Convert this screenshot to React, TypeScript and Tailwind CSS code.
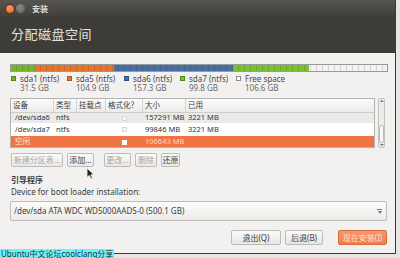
import React from "react";

const cols = "grid grid-cols-[43px_23px_29px_37px_43px_1fr] whitespace-nowrap";

function Btn({ children, disabled, w }: { children: React.ReactNode; disabled?: boolean; w: string }) {
  return (
    <div
      className={`${w} h-[14px] flex items-center justify-center rounded-[2px] border border-[#bdbbb8] bg-[linear-gradient(#fbfbfa,#e9e8e6)] text-[8px] leading-none whitespace-nowrap ${
        disabled ? "text-[#a9a7a4]" : "text-[#3c3c3c]"
      }`}
    >
      {children}
    </div>
  );
}

function Legend({ color, name, size, border }: { color: string; name: string; size: string; border: string }) {
  return (
    <div className="flex gap-[4px]">
      <div className={`mt-[2px] w-[5px] h-[5px] ${color} border ${border}`} />
      <div className="flex flex-col text-[8px] leading-[9px] whitespace-nowrap">
        <span className="text-[#4a4a4a]">{name}</span>
        <span className="text-[#6a6a6a]">{size}</span>
      </div>
    </div>
  );
}

function Check({ white }: { white?: boolean }) {
  return (
    <div className="flex items-center justify-center">
      <div className={`w-[5px] h-[5px] ${white ? "bg-white" : "border border-[#d8d8d8] bg-[#f6f6f6]"}`} />
    </div>
  );
}

export default function App() {
  const font = "font-['Noto_Sans','Noto_Sans_CJK_SC',sans-serif]";
  return (
    <div className={`w-[400px] h-[258px] relative overflow-hidden bg-[#e6e5e3] ${font}`}>
      <div className="w-[396px] h-[254px] flex flex-col border-r border-b border-[#3a3935] bg-[#f2f1f0]">
        {/* title bar */}
        <div className="h-[17px] flex items-center bg-[linear-gradient(#57554f,#403f3a)]">
          <div className="ml-[5px] w-[10px] h-[10px] rounded-full bg-[radial-gradient(circle_at_40%_35%,#f59a6b,#e05a22)] border border-[#5a2a14]" />
          <div className="ml-[1px] w-[9px] h-[9px] rounded-full bg-[radial-gradient(circle_at_40%_35%,#8a8983,#5f5e59)]" />
          <span className="ml-[7px] text-[8px] text-[#dfdbd2] font-bold leading-none">安装</span>
        </div>
        {/* header */}
        <div className="h-[36px] bg-[#3d3c38] flex items-center pl-[11px] pb-[2px]">
          <span className="text-[13px] text-[#e4e2dd] leading-none tracking-[0.5px]">分配磁盘空间</span>
        </div>
        {/* body */}
        <div className="flex-1 flex flex-col px-[10px]">
          {/* partition bar */}
          <div className="mt-[11px] h-[8px] w-[378px] flex border border-[#9a9a9a] relative">
            <div className="w-[24px] bg-[#74b52c]" />
            <div className="w-[79px] bg-[#e4762c]" />
            <div className="w-[119px] bg-[#4870a6]" />
            <div className="w-[76px] bg-[#7ac033]" />
            <div className="flex-1 bg-[#f3f3f3]" />
            <div className="absolute inset-0 bg-[repeating-linear-gradient(90deg,transparent_0,transparent_5px,rgba(0,0,0,0.12)_5px,rgba(0,0,0,0.12)_6px)]" />
          </div>
          {/* legend */}
          <div className="mt-[2px] flex pl-[1px]">
            <div className="w-[56px]"><Legend color="bg-[#74b52c]" border="border-[#4e8a1a]" name="sda1 (ntfs)" size="31.5 GB" /></div>
            <div className="w-[57px]"><Legend color="bg-[#e4762c]" border="border-[#b0531a]" name="sda5 (ntfs)" size="104.9 GB" /></div>
            <div className="w-[56px]"><Legend color="bg-[#4870a6]" border="border-[#2d4f80]" name="sda6 (ntfs)" size="157.3 GB" /></div>
            <div className="w-[56px]"><Legend color="bg-[#7ac033]" border="border-[#4e8a1a]" name="sda7 (ntfs)" size="99.8 GB" /></div>
            <div><Legend color="bg-white" border="border-[#8a8a8a]" name="Free space" size="106.6 GB" /></div>
          </div>
          {/* table */}
          <div className="mt-[6px] flex gap-[3px]">
            <div className="w-[369px] h-[50px] border border-[#b5b3b0] flex flex-col text-[7.5px] leading-none overflow-hidden">
              <div className={`${cols} h-[14px] shrink-0 bg-[linear-gradient(#fbfbfb,#ebebea)] border-b border-[#cfcdca] text-[#3c3c3c]`}>
                <div className="pl-[2px] flex items-center border-r border-[#d5d3d0]">设备</div>
                <div className="pl-[2px] flex items-center border-r border-[#d5d3d0]">类型</div>
                <div className="pl-[2px] flex items-center border-r border-[#d5d3d0]">挂载点</div>
                <div className="pl-[2px] flex items-center border-r border-[#d5d3d0]">格式化？</div>
                <div className="pl-[2px] flex items-center border-r border-[#d5d3d0]">大小</div>
                <div className="pl-[2px] flex items-center">已用</div>
              </div>
              <div className={`${cols} h-[10px] shrink-0 bg-[#ebeae9] text-[#333]`}>
                <div className="pl-[4px] flex items-center">/dev/sda6</div>
                <div className="pl-[2px] flex items-center">ntfs</div>
                <div />
                <Check />
                <div className="pl-[2px] flex items-center">157291 MB</div>
                <div className="pl-[2px] flex items-center">3221 MB</div>
              </div>
              <div className={`${cols} h-[13px] shrink-0 bg-white text-[#333]`}>
                <div className="pl-[4px] flex items-center">/dev/sda7</div>
                <div className="pl-[2px] flex items-center">ntfs</div>
                <div />
                <Check />
                <div className="pl-[2px] flex items-center">99846 MB</div>
                <div className="pl-[2px] flex items-center">3221 MB</div>
              </div>
              <div className={`${cols} h-[12px] shrink-0 bg-[#ef7644] text-[#fbd5c2]`}>
                <div className="pl-[4px] flex items-center text-[#fde8dc]">空闲</div>
                <div />
                <div />
                <Check white />
                <div className="pl-[2px] flex items-center">106643 MB</div>
                <div />
              </div>
            </div>
            {/* scrollbar */}
            <div className="w-[7px] h-[50px] border border-[#c4c2bf] rounded-[2px] bg-[#ecebea] flex flex-col items-center justify-between py-[1px]">
              <div className="w-0 h-0 border-l-[2px] border-r-[2px] border-b-[2px] border-l-transparent border-r-transparent border-b-[#777]" />
              <div className="flex flex-col items-center gap-[1px]">
                <div className="w-[5px] h-[18px] rounded-[2px] border border-[#bdbbb8] bg-[#f8f8f7]" />
                <div className="w-0 h-0 border-l-[2px] border-r-[2px] border-t-[2px] border-l-transparent border-r-transparent border-t-[#777]" />
              </div>
            </div>
          </div>
          {/* buttons */}
          <div className="mt-[5px] flex gap-[4px] pl-[1px]">
            <Btn w="w-[52px]" disabled>新建分区表...</Btn>
            <Btn w="w-[27px]">添加...</Btn>
            <div className="w-[2px]" />
            <Btn w="w-[27px]" disabled>更改...</Btn>
            <Btn w="w-[22px]" disabled>删除</Btn>
            <Btn w="w-[19px]">还原</Btn>
          </div>
          <div className="mt-[9px] pl-[1px] text-[8px] font-bold text-[#3c3c3c] leading-none">引导程序</div>
          <div className="mt-[4px] pl-[1px] text-[8px] text-[#3c3c3c] leading-none">Device for boot loader installation:</div>
          <div className="mt-[5px] w-[377px] h-[20px] rounded-[2px] border border-[#bdbbb8] bg-[linear-gradient(#fbfbfa,#ecebea)] flex items-center justify-between pl-[3px] pr-[4px]">
            <span className="text-[8px] text-[#3c3c3c] leading-none">/dev/sda ATA WDC WD5000AADS-0 (500.1 GB)</span>
            <div className="flex flex-col items-center gap-[1px]">
              <div className="w-[5px] h-[1px] bg-[#777]" />
              <div className="w-0 h-0 border-l-[2.5px] border-r-[2.5px] border-t-[3px] border-l-transparent border-r-transparent border-t-[#777]" />
            </div>
          </div>
          {/* bottom buttons */}
          <div className="mt-[9px] flex justify-end gap-[4px] -mr-[2px]">
            <div className="w-[50px] h-[15px] flex items-center justify-center rounded-[2px] border border-[#bdbbb8] bg-[linear-gradient(#fbfbfa,#e6e5e3)] text-[8px] text-[#3c3c3c] leading-none">退出(Q)</div>
            <div className="w-[38px] h-[15px] flex items-center justify-center rounded-[2px] border border-[#bdbbb8] bg-[linear-gradient(#fbfbfa,#e6e5e3)] text-[8px] text-[#3c3c3c] leading-none">后退(B)</div>
            <div className="ml-[11px] w-[49px] h-[15px] flex items-center justify-center rounded-[2px] border border-[#d86b3c] bg-[linear-gradient(#f59670,#ee7e50)] text-[8px] text-[#fde6da] leading-none">现在安装(I)</div>
          </div>
        </div>
      </div>
      {/* watermark */}
      <div className="absolute left-0 bottom-0 h-[9px] px-[1px] bg-[#6ff2f2] text-[8px] leading-[9px] text-[#16324a]">Ubuntu中文论坛coolclang分享</div>
      {/* cursor */}
      <svg className="absolute left-[86px] top-[167px]" width="9" height="13" viewBox="0 0 9 13">
        <path d="M1 1 L1 10.5 L3.3 8.4 L5 12 L6.5 11.3 L4.9 7.8 L8 7.8 Z" fill="#222" stroke="#fff" strokeWidth="0.8" />
      </svg>
    </div>
  );
}
